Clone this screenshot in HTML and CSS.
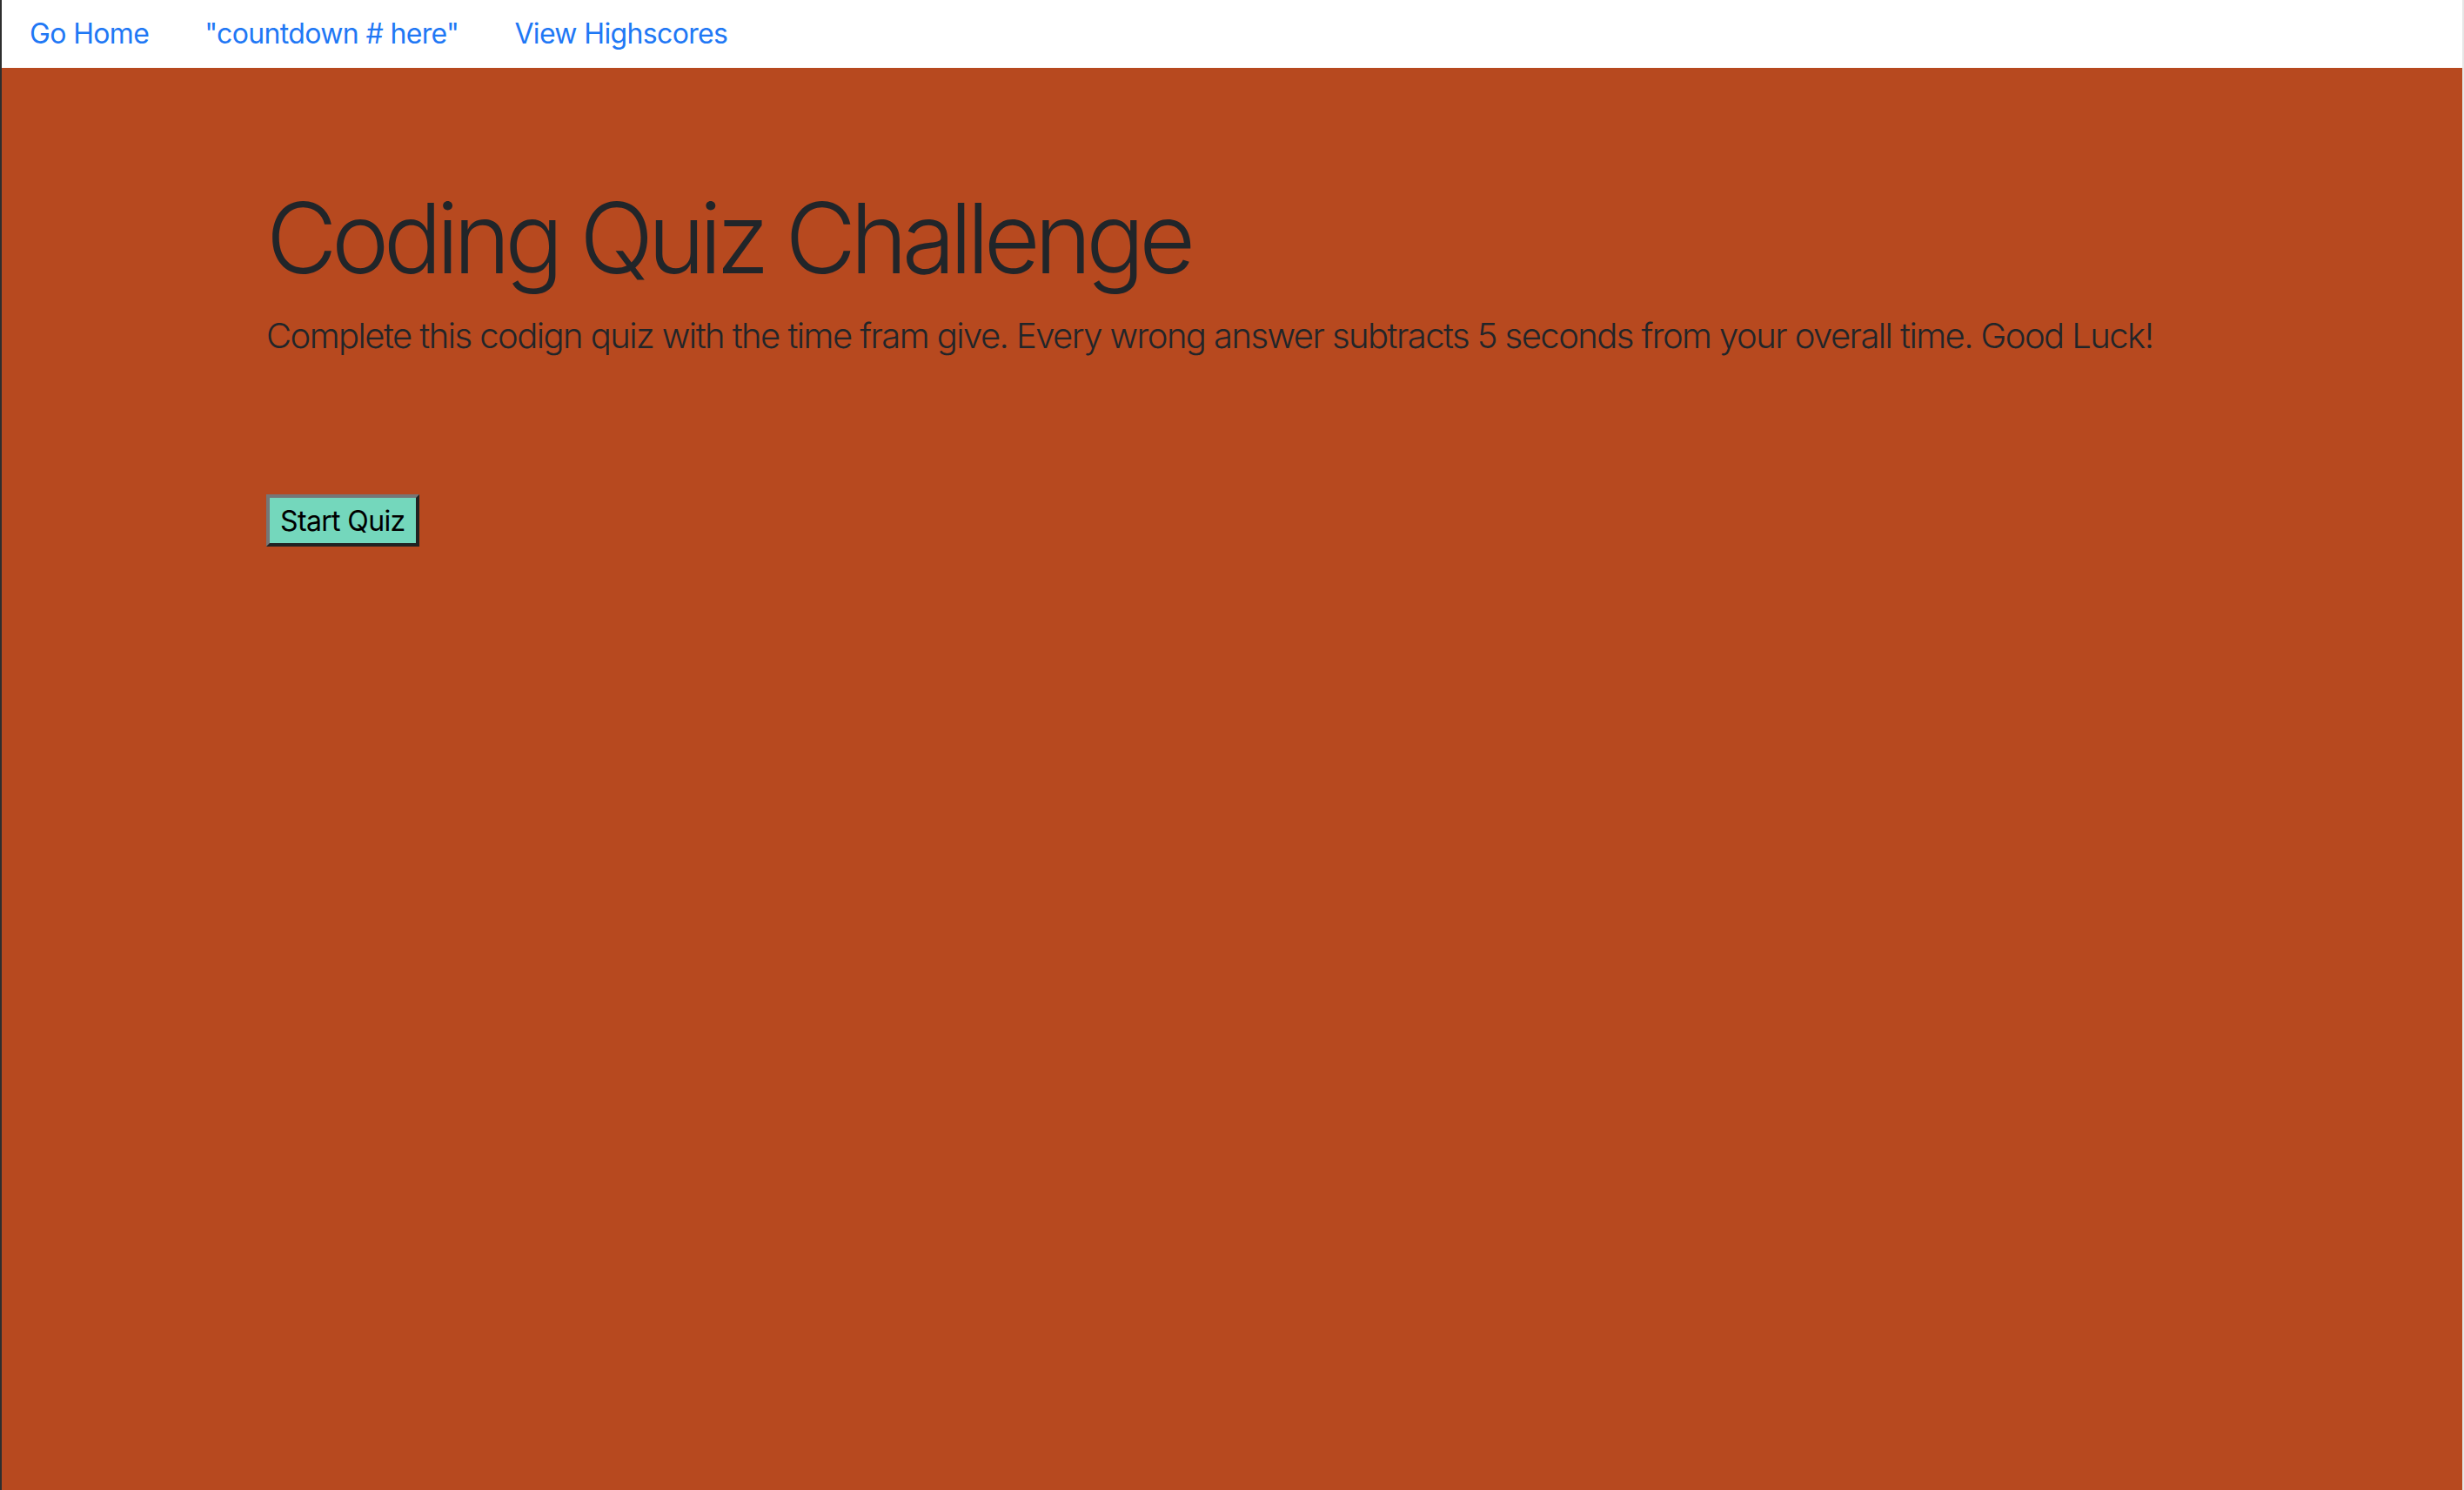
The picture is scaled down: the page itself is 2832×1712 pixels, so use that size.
FILE: index.html
```html
<!DOCTYPE html>
<html lang="en">
<head>
<meta charset="utf-8">
<title>Coding Quiz Challenge</title>
<link rel="stylesheet" href="styles.css">
</head>
<body>
<div class="frame">
  <nav class="topnav">
    <a class="nav-link" href="#">Go Home</a>
    <a class="nav-link" href="#">"countdown # here"</a>
    <a class="nav-link" href="#">View Highscores</a>
  </nav>
  <main class="jumbotron">
    <div class="container">
      <h1 class="display">Coding Quiz Challenge</h1>
      <p class="lead">Complete this codign quiz with the time fram give. Every wrong answer subtracts 5 seconds from your overall time. Good Luck!</p>
      <button class="start-btn" type="button">Start Quiz</button>
    </div>
  </main>
</div>
</body>
</html>
```

FILE: styles.css
```css
html, body {
  margin: 0;
  padding: 0;
}
body {
  background: #b7491f;
  font-family: Inter, "Noto Sans", "Liberation Sans", sans-serif;
  color: #212529;
}
.frame {
  min-height: 100vh;
  box-sizing: border-box;
  border-left: 2px solid #2e2e2e;
  border-right: 2px solid #e6e6e6;
  display: flex;
  flex-direction: column;
}
.topnav {
  background: #ffffff;
  height: 78px;
  display: flex;
  align-items: center;
}
.nav-link {
  color: #1f78f5;
  text-decoration: none;
  font-size: 32px;
  line-height: 48px;
  letter-spacing: -0.02em;
  padding: 0 32px;
}
.jumbotron {
  flex: 1;
  background: #b7491f;
  padding-top: 128px;
}
.container {
  box-sizing: border-box;
  max-width: 2280px;
  margin: 0 auto;
  padding: 0 30px;
}
.display {
  margin: 0 0 16px 0;
  font-size: 112px;
  font-weight: 300;
  line-height: 1.2;
  letter-spacing: -0.059em;
  color: #212529;
}
.lead {
  margin: 0;
  font-size: 40px;
  font-weight: 300;
  line-height: 60px;
  letter-spacing: -0.039em;
  color: #212529;
}
.start-btn {
  margin-top: 152px;
  display: block;
  height: 60px;
  padding: 0 12px;
  font-family: Inter, "Noto Sans", "Liberation Sans", sans-serif;
  font-size: 32px;
  letter-spacing: -0.02em;
  color: #000;
  background: #74d7bc;
  border-width: 4px;
  border-style: solid;
  border-color: #767676 #222222 #222222 #767676;
}
```
